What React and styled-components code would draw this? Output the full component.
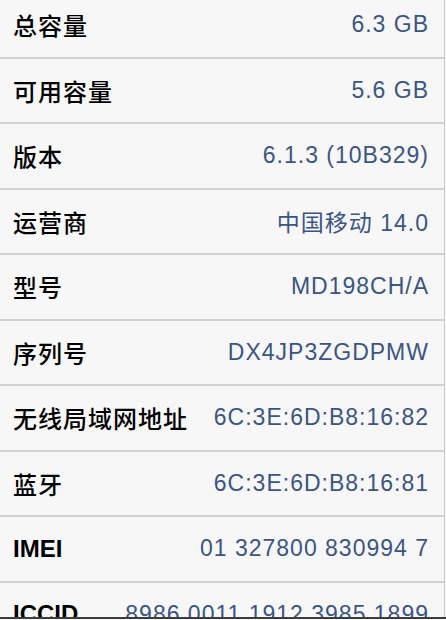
import React from 'react'
import styled, { createGlobalStyle } from 'styled-components'

const Global = createGlobalStyle`
  html, body {
    margin: 0;
    padding: 0;
    background: #fbfbfb;
  }
`

const Screen = styled.div`
  width: 446px;
  height: 617px;
  overflow: hidden;
  border-bottom: 2px solid #3c3c3c;
  background: #fbfbfb;
`

const List = styled.ul`
  list-style: none;
  margin: -7px 0 0 0;
  padding: 0;
  width: 444px;
  border-right: 1px solid #c9c9c9;
  background: #f7f7f7;
`

const Row = styled.li`
  display: flex;
  align-items: center;
  justify-content: space-between;
  box-sizing: border-box;
  height: 65.5px;
  padding: 0 16px 0 13px;
  border-bottom: 2px solid #d2d2d2;
`

const Label = styled.span`
  font-family: ${p => (p.latin ? '"Liberation Sans", Arial' : '"Noto Sans CJK SC", "Liberation Sans"')}, sans-serif;
  font-weight: ${p => (p.latin ? 700 : 500)};
  font-size: 24px;
  letter-spacing: ${p => (p.latin ? '0' : '1px')};
  color: #000;
  white-space: nowrap;
`

const Value = styled.span`
  font-family: "Liberation Sans", Arial, "Noto Sans CJK SC", sans-serif;
  font-size: 23px;
  letter-spacing: 1px;
  margin-right: -1px;
  color: #3b5583;
  white-space: nowrap;
`

const rows = [
  ['总容量', '6.3 GB'],
  ['可用容量', '5.6 GB'],
  ['版本', '6.1.3 (10B329)'],
  ['运营商', '中国移动 14.0'],
  ['型号', 'MD198CH/A'],
  ['序列号', 'DX4JP3ZGDPMW'],
  ['无线局域网地址', '6C:3E:6D:B8:16:82'],
  ['蓝牙', '6C:3E:6D:B8:16:81'],
  ['IMEI', '01 327800 830994 7', true],
  ['ICCID', '8986 0011 1912 3985 1899', true],
]

export default function App() {
  return (
    <Screen>
      <Global />
      <List>
        {rows.map(([label, value, latin]) => (
          <Row key={label}>
            <Label latin={latin}>{label}</Label>
            <Value>{value}</Value>
          </Row>
        ))}
      </List>
    </Screen>
  )
}
